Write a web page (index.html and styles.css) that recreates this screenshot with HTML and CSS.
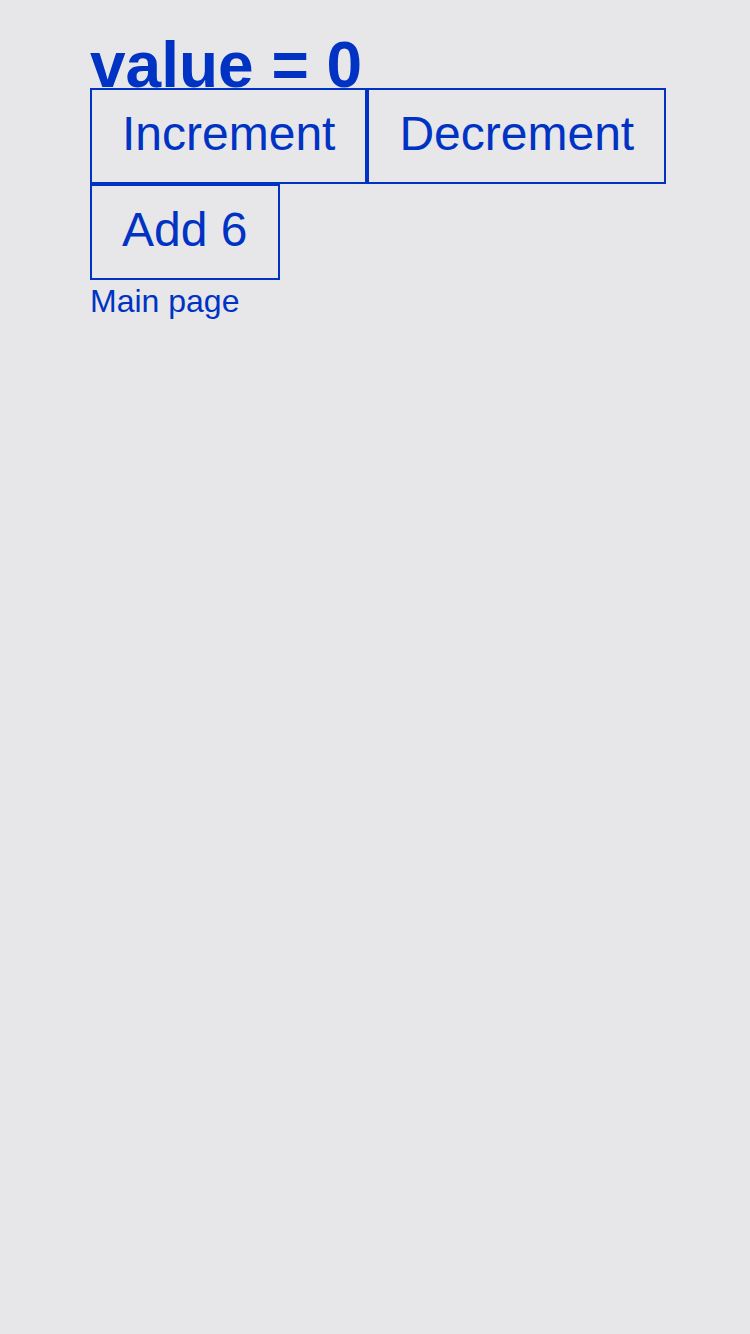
FILE: index.html
```html
<!DOCTYPE html>
<html>
<head>
<meta charset="utf-8">
<link rel="stylesheet" href="styles.css">
</head>
<body>
<div class="page">
  <h1 class="title">value = 0</h1>
  <div class="row">
    <button class="btn">Increment</button>
    <button class="btn">Decrement</button>
  </div>
  <div class="row">
    <button class="btn btn-wide">Add 6</button>
  </div>
  <a class="link">Main page</a>
</div>
</body>
</html>
```

FILE: styles.css
```css
html, body {
  margin: 0;
  padding: 0;
  background: #e7e7e9;
  width: 750px;
  height: 1334px;
}
.page {
  padding: 42px 0 0 90px;
  display: flex;
  flex-direction: column;
  align-items: flex-start;
  font-family: "Liberation Sans", Arial, sans-serif;
  color: #0033c4;
}
.title {
  margin: 0;
  font-size: 64px;
  font-weight: bold;
  line-height: 46px;
}
.row {
  display: flex;
}
.btn {
  font-family: "Liberation Sans", Arial, sans-serif;
  font-size: 48px;
  line-height: 56px;
  color: #0033c4;
  background: transparent;
  border: 2px solid #0033c4;
  border-radius: 0;
  padding: 16px 30px 20px;
  margin: 0;
}
.btn-wide {
  padding-right: 31px;
}
.link {
  font-size: 32px;
  line-height: 43px;
  color: #0033c4;
}
```
